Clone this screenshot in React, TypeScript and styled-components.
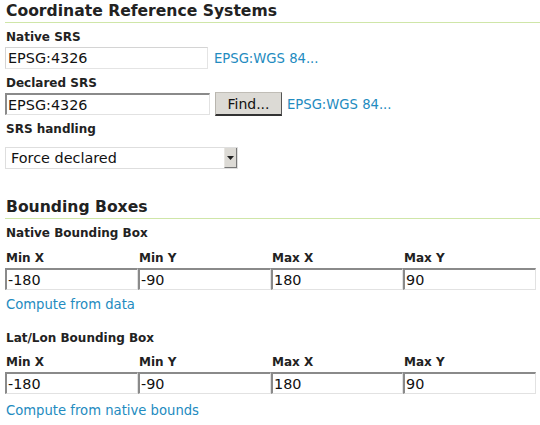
import React from "react";
import styled, { createGlobalStyle } from "styled-components";

const Global = createGlobalStyle`
  html, body { margin: 0; padding: 0; background: #ffffff; }
  body { font-family: "DejaVu Sans", Verdana, sans-serif; font-size: 12px; color: #222; }
  * { box-sizing: border-box; }
`;

const Page = styled.div`
  width: 540px;
  padding: 0 4px 0 5px;
`;

const Heading = styled.h3<{ $top: number }>`
  margin: ${(p) => p.$top}px -4px 0 0;
  padding: 0 0 2px 1px;
  font-size: 15.6px;
  line-height: 18px;
  font-weight: bold;
  color: #222;
  border-bottom: 1px solid #cfe6a8;
`;

const SubHeading = styled.div<{ $top: number }>`
  margin: ${(p) => p.$top}px 0 0 1px;
  font-size: 12px;
  line-height: 15px;
  font-weight: bold;
  color: #222;
`;

const Label = styled.label<{ $top: number }>`
  display: block;
  margin: ${(p) => p.$top}px 0 0 1px;
  font-size: 12px;
  line-height: 15px;
  font-weight: bold;
  color: #222;
`;

const Row = styled.div<{ $top: number }>`
  display: flex;
  align-items: center;
  margin-top: ${(p) => p.$top}px;
`;

const TextInput = styled.input<{ $w?: number; $flat?: boolean }>`
  width: ${(p) => (p.$w ? `${p.$w}px` : "100%")};
  height: 22px;
  margin: 0;
  padding: 0 2px;
  font-family: "DejaVu Sans", Verdana, sans-serif;
  font-size: 14.4px;
  color: #111;
  background: #fff;
  border: 1px solid #e2e2e2;
  ${(p) =>
    p.$flat
      ? "border-color: #d4d4d4 #e4e4e4 #e4e4e4 #d4d4d4;"
      : "border-top: 2px solid #8a8a8a; border-left: 2px solid #8a8a8a; padding-left: 1px;"}
  outline: none;
`;

const Link = styled.a<{ $gap?: number }>`
  margin-left: ${(p) => p.$gap ?? 0}px;
  font-size: 13.2px;
  line-height: 15px;
  color: #238bc0;
  text-decoration: none;
  cursor: pointer;
`;

const BlockLink = styled(Link)<{ $top: number }>`
  display: block;
  margin: ${(p) => p.$top}px 0 0 1px;
`;

const Button = styled.button`
  margin-left: 5px;
  width: 67px;
  height: 24px;
  padding: 0;
  font-family: "DejaVu Sans", Verdana, sans-serif;
  font-size: 14px;
  color: #111;
  background: #dcdad5;
  border: 1px solid;
  border-color: #c0bdb6 #555 #333 #b8b5ae;
  border-bottom-width: 2px;
`;

const SelectBox = styled.div<{ $top: number }>`
  margin-top: ${(p) => p.$top}px;
  width: 233px;
  height: 22px;
  display: flex;
  align-items: stretch;
  border: 1px solid #dedede;
  background: #fff;
`;

const SelectText = styled.div`
  flex: 1;
  padding-left: 5px;
  font-size: 14.4px;
  line-height: 20px;
  color: #111;
`;

const SelectArrow = styled.div`
  width: 13px;
  background: #dcdad5;
  border-left: 1px solid #e8e6e2;
  border-right: 1px solid #777;
  border-bottom: 1px solid #777;
  display: flex;
  align-items: center;
  justify-content: center;
`;

const Grid = styled.div<{ $top: number }>`
  display: grid;
  grid-template-columns: 133px 133px 132px 133px;
  margin-top: ${(p) => p.$top}px;
`;

const Cell = styled.div``;

const CellLabel = styled.div`
  margin-left: 1px;
  font-size: 12px;
  line-height: 15px;
  font-weight: bold;
  color: #222;
  margin-bottom: 2px;
`;

const boxFields = [
  { label: "Min X", value: "-180" },
  { label: "Min Y", value: "-90" },
  { label: "Max X", value: "180" },
  { label: "Max Y", value: "90" },
];

function BoxGrid({ top }: { top: number }) {
  return (
    <Grid $top={top}>
      {boxFields.map((f) => (
        <Cell key={f.label}>
          <CellLabel>{f.label}</CellLabel>
          <TextInput defaultValue={f.value} />
        </Cell>
      ))}
    </Grid>
  );
}

export default function App() {
  return (
    <Page>
      <Global />
      <Heading $top={2}>Coordinate Reference Systems</Heading>
      <Label $top={7}>Native SRS</Label>
      <Row $top={2}>
        <TextInput $w={203} $flat defaultValue="EPSG:4326" />
        <Link $gap={6}>EPSG:WGS 84...</Link>
      </Row>
      <Label $top={7}>Declared SRS</Label>
      <Row $top={1}>
        <TextInput $w={205} defaultValue="EPSG:4326" />
        <Button>Find...</Button>
        <Link $gap={5}>EPSG:WGS 84...</Link>
      </Row>
      <Label $top={6}>SRS handling</Label>
      <SelectBox $top={10}>
        <SelectText>Force declared</SelectText>
        <SelectArrow>
          <svg width="7" height="4" viewBox="0 0 7 4">
            <path d="M0 0 H7 L3.5 4 Z" fill="#222" />
          </svg>
        </SelectArrow>
      </SelectBox>
      <Heading $top={29}>Bounding Boxes</Heading>
      <SubHeading $top={7}>Native Bounding Box</SubHeading>
      <BoxGrid top={10} />
      <BlockLink $top={7}>Compute from data</BlockLink>
      <SubHeading $top={19}>Lat/Lon Bounding Box</SubHeading>
      <BoxGrid top={9} />
      <BlockLink $top={9}>Compute from native bounds</BlockLink>
    </Page>
  );
}
